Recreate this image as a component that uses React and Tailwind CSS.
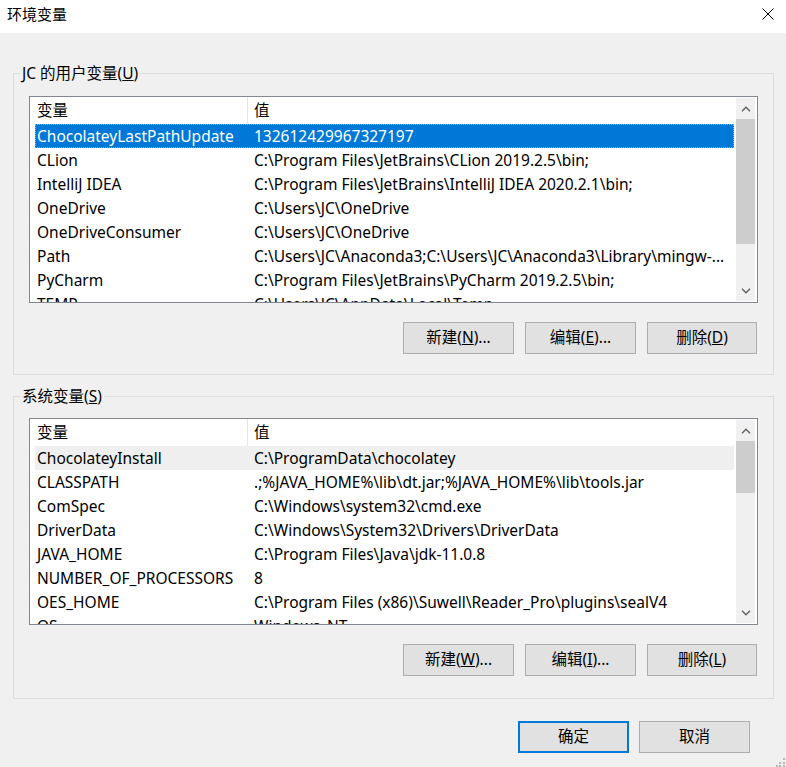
import React from "react";

const userVars = [
  ["ChocolateyLastPathUpdate", "132612429967327197"],
  ["CLion", "C:\\Program Files\\JetBrains\\CLion 2019.2.5\\bin;"],
  ["IntelliJ IDEA", "C:\\Program Files\\JetBrains\\IntelliJ IDEA 2020.2.1\\bin;"],
  ["OneDrive", "C:\\Users\\JC\\OneDrive"],
  ["OneDriveConsumer", "C:\\Users\\JC\\OneDrive"],
  ["Path", "C:\\Users\\JC\\Anaconda3;C:\\Users\\JC\\Anaconda3\\Library\\mingw-..."],
  ["PyCharm", "C:\\Program Files\\JetBrains\\PyCharm 2019.2.5\\bin;"],
  ["TEMP", "C:\\Users\\JC\\AppData\\Local\\Temp"],
];

const sysVars = [
  ["ChocolateyInstall", "C:\\ProgramData\\chocolatey"],
  ["CLASSPATH", ".;%JAVA_HOME%\\lib\\dt.jar;%JAVA_HOME%\\lib\\tools.jar"],
  ["ComSpec", "C:\\Windows\\system32\\cmd.exe"],
  ["DriverData", "C:\\Windows\\System32\\Drivers\\DriverData"],
  ["JAVA_HOME", "C:\\Program Files\\Java\\jdk-11.0.8"],
  ["NUMBER_OF_PROCESSORS", "8"],
  ["OES_HOME", "C:\\Program Files (x86)\\Suwell\\Reader_Pro\\plugins\\sealV4"],
  ["OS", "Windows_NT"],
];

function Chevron({ up }) {
  return (
    <svg width="10" height="6" viewBox="0 0 10 6" className="block">
      <path
        d={up ? "M1 5.2 L5 1.2 L9 5.2" : "M1 0.8 L5 4.8 L9 0.8"}
        fill="none"
        stroke="#606060"
        strokeWidth="1.4"
      />
    </svg>
  );
}

function ListView({ rows, selected, hover, thumbHeight }) {
  return (
    <div className="flex h-[207px] border border-[#828790] bg-white">
      <div className="flex-1 min-w-0 overflow-hidden">
        <div className="flex h-[27px] items-center">
          <div className="w-[218px] h-full pl-[7px] border-r border-[#e5e5e5] flex items-center">
            变量
          </div>
          <div className="pl-[6px]">值</div>
        </div>
        {rows.map(([name, value], idx) => (
          <div
            key={idx}
            className={
              "ml-[5px] h-[24px] flex items-center leading-[24px] whitespace-nowrap " +
              (idx === selected
                ? "bg-[#0078d7] text-white outline outline-1 outline-dotted outline-offset-[-1px] outline-[#f39a3a]"
                : idx === hover
                ? "bg-[#efefef]"
                : "")
            }
          >
            <div className="w-[219px] pl-[2px] shrink-0 overflow-hidden">{name}</div>
            <div className="flex-1 min-w-0 overflow-hidden">{value}</div>
          </div>
        ))}
      </div>
      <div className="w-[19px] my-[1px] ml-[2px] mr-[2px] bg-[#f0f0f0] flex flex-col">
        <div className="h-[21px] flex items-center justify-center">
          <Chevron up />
        </div>
        <div className="bg-[#cdcdcd]" style={{ height: thumbHeight }} />
        <div className="flex-1" />
        <div className="h-[21px] flex items-center justify-center">
          <Chevron />
        </div>
      </div>
    </div>
  );
}

function Btn({ children, primary, w = "w-[111px]" }) {
  return (
    <button
      className={
        w +
        " h-[32px] bg-[#e1e1e1] flex items-center justify-center text-black " +
        (primary ? "border-2 border-[#0078d7]" : "border border-[#adadad]")
      }
    >
      {children}
    </button>
  );
}

function GroupBox({ label, rows, selected, hover, thumbHeight, buttons, className, listClass }) {
  return (
    <fieldset className={"border border-[#dcdcdc] " + className}>
      <legend className="ml-[6px] px-[2px] leading-[20px]">{label}</legend>
      <div className={"mx-[15px] " + listClass}>
        <ListView rows={rows} selected={selected} hover={hover} thumbHeight={thumbHeight} />
      </div>
      <div className="flex justify-end gap-[11px] pr-[16px] mt-[19px]">
        <Btn>{buttons[0]}</Btn>
        <Btn>{buttons[1]}</Btn>
        <Btn w="w-[110px]">{buttons[2]}</Btn>
      </div>
    </fieldset>
  );
}

export default function App() {
  return (
    <div className="relative w-[786px] h-[767px] bg-[#f0f0f0] text-[15.5px] text-black font-['Noto_Sans','Noto_Sans_CJK_SC',sans-serif] overflow-hidden">
      <div className="h-[33px] bg-white flex justify-between items-start">
        <div className="pl-[7px] pt-[4px] leading-[20px] text-[15px]">环境变量</div>
        <svg width="12" height="12" viewBox="0 0 12 12" className="mt-[8px] mr-[12px]">
          <path d="M0.5 0.5 L11.5 11.5 M11.5 0.5 L0.5 11.5" stroke="#000" strokeWidth="1" />
        </svg>
      </div>
      <div className="pl-[13px] pr-[12px] pt-[30px]">
        <GroupBox
          className="pb-[20px]"
          listClass="mt-[13px]"
          label={
            <>
              JC 的用户变量(<span className="underline">U</span>)
            </>
          }
          rows={userVars}
          selected={0}
          thumbHeight={125}
          buttons={[
            <>新建(<span className="underline">N</span>)...</>,
            <>编辑(<span className="underline">E</span>)...</>,
            <>删除(<span className="underline">D</span>)</>,
          ]}
        />
        <GroupBox
          className="mt-[11px] pb-[22px]"
          listClass="mt-[12px]"
          label={
            <>
              系统变量(<span className="underline">S</span>)
            </>
          }
          rows={sysVars}
          hover={0}
          thumbHeight={52}
          buttons={[
            <>新建(<span className="underline">W</span>)...</>,
            <>编辑(<span className="underline">I</span>)...</>,
            <>删除(<span className="underline">L</span>)</>,
          ]}
        />
        <div className="flex justify-end gap-[10px] pr-[24px] mt-[22px]">
          <Btn primary>确定</Btn>
          <Btn>取消</Btn>
        </div>
      </div>
      <svg width="10" height="10" viewBox="0 0 10 10" className="absolute right-0 bottom-0">
        <rect x="7" y="1" width="2" height="2" fill="#b5b5b5" />
        <rect x="3" y="5" width="2" height="2" fill="#b5b5b5" />
        <rect x="7" y="5" width="2" height="2" fill="#b5b5b5" />
        <rect x="0" y="8" width="2" height="2" fill="#b5b5b5" />
        <rect x="3" y="8" width="2" height="2" fill="#b5b5b5" />
        <rect x="7" y="8" width="2" height="2" fill="#b5b5b5" />
      </svg>
    </div>
  );
}
